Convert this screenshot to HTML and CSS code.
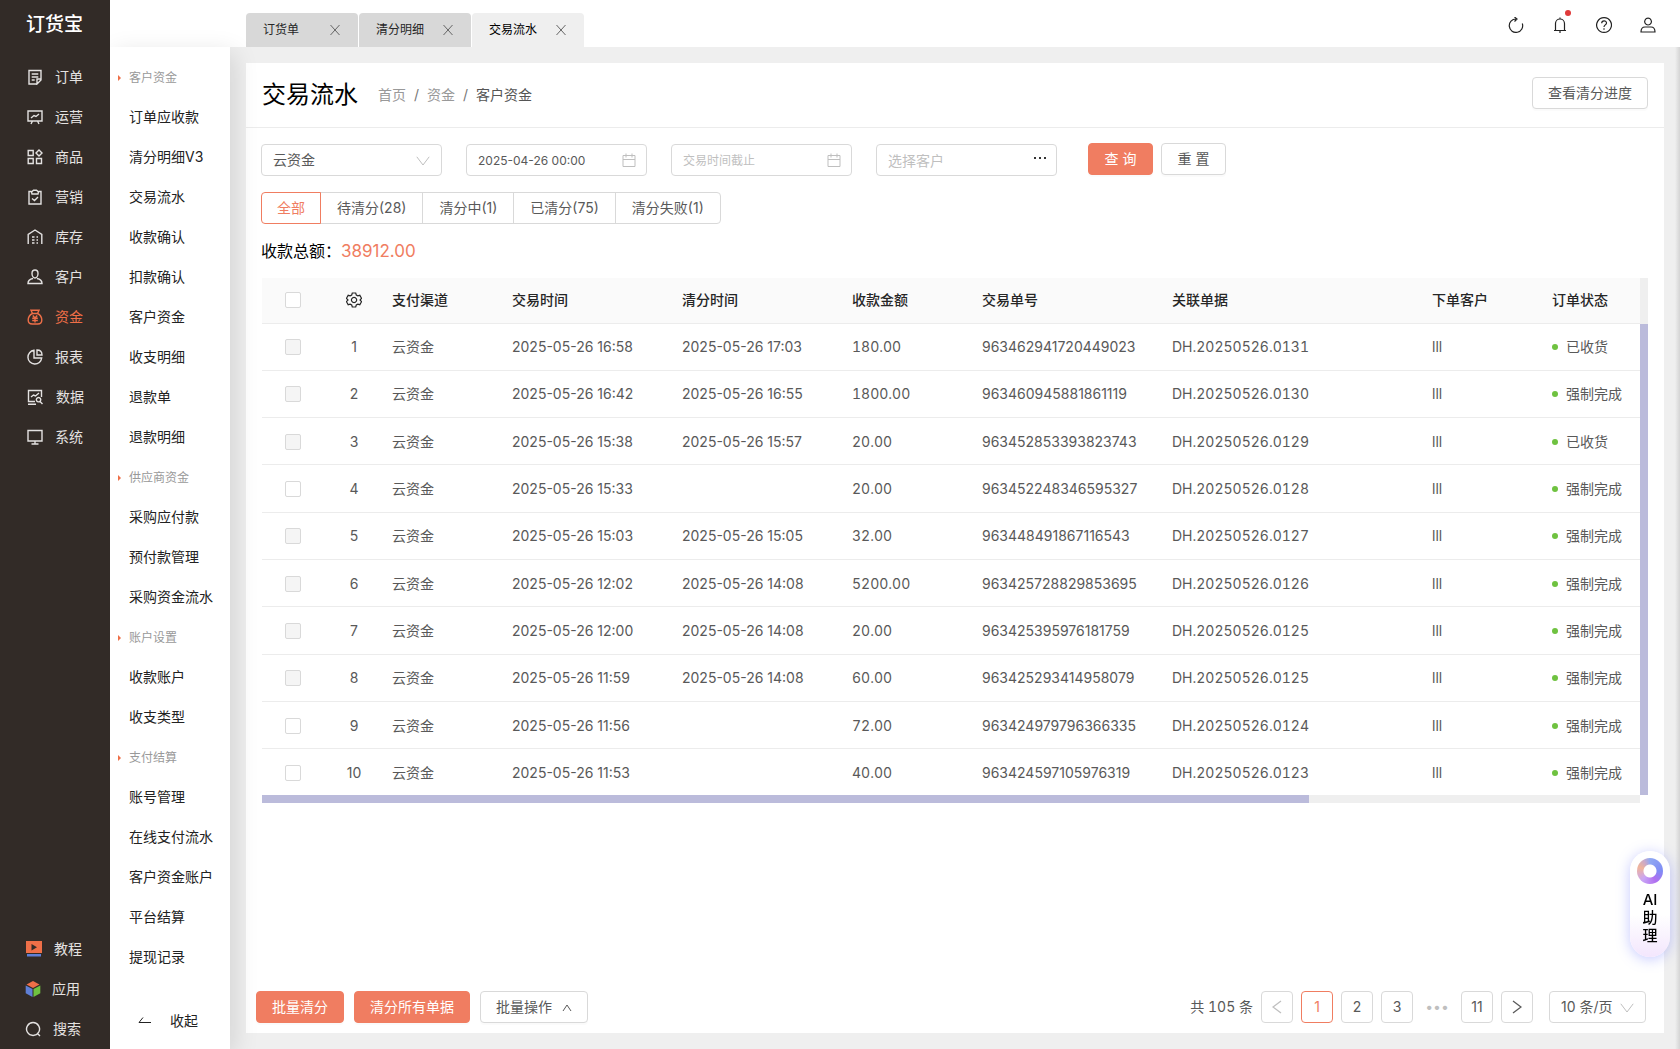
FILE: index.html
```html
<!DOCTYPE html>
<html lang="zh-CN">
<head>
  <meta charset="UTF-8" />
  <meta name="viewport" content="width=device-width, initial-scale=1.0" />
  <title>交易流水</title>
  <link rel="stylesheet" href="styles.css">
</head>
<body>

  <svg class="sprite" aria-hidden="true">
    <symbol id="i-close" viewBox="0 0 12 12"><path d="M1.5 1l9 10M10.5 1l-9 10"/></symbol>
    <symbol id="i-down" viewBox="0 0 14 10"><path d="M.8.8 7 9 13.200.8"/></symbol>
    <symbol id="i-date" viewBox="0 0 16 16"><path d="M2 3.500h12v11H2zM2 7.500h12M5 1.500v4M11 1.500v4"/></symbol>
  </svg>

  <div class="app">
    <aside class="sidebar">
      <div class="logo">订货宝</div>
      <nav class="menu">
        <a href="#"><svg viewBox="0 0 16 16"><path d="M9.500 15H2V1.500h12V10M4.700 5h6.600M4.700 8h6.600M4.700 11h3M14 10h-4v5l4-4z"/></svg>订单</a>
        <a href="#"><svg viewBox="0 0 16 16"><path d="M1 2h14v10H1zM5.500 12 4 15M10.500 12l1.500 3M4 9l3-2.500 2 1L12 5"/></svg>运营</a>
        <a href="#"><svg viewBox="0 0 16 16"><path d="M1.200 1.500h5v5h-5zM1.200 9.500h5v5h-5zM9.500 9.500h5v5h-5zM12 1l3 3-3 3-3-3z"/></svg>商品</a>
        <a href="#"><svg viewBox="0 0 16 16"><path d="M4.500 2.500H2V15h12V2.500h-2.500M5 5h6l.5-2-2-1.800h-3L4.500 3zM5 9.500l2.500 2L11 8"/></svg>营销</a>
        <a href="#"><svg viewBox="0 0 16 16"><path d="M1.200 15V5.500L8 1l6.800 4.500V15M5 8h2.500M9.500 8H11M5 11h2.500M9.500 11H11M5 14h2.500M9.500 14H11"/></svg>库存</a>
        <a href="#"><svg viewBox="0 0 16 16"><path d="M8 1c2 0 3 1.500 3 3.500S9.800 9 8 9 5 6.500 5 4.500 6 1 8 1zM6 9.500c-3 .5-5 2-5 5h14c0-3-2-4.500-5-5"/></svg>客户</a>
        <a href="#" class="active"><svg viewBox="0 0 16 16"><path d="M5.500 4.500 4 1.200h8l-1.500 3.300zM5.500 4.500C2.500 6 1.200 8.500 1.200 11c0 2.500 1.800 4 4 4h5.600c2.200 0 4-1.500 4-4 0-2.500-1.300-5-4.300-6.500M5.800 6.500 8 9l2.200-2.500M5.200 9.300h5.600M5.200 11.500h5.600M8 9v4.500"/></svg>资金</a>
        <a href="#"><svg viewBox="0 0 16 16"><path d="M7 1.300a6.900 6.900 0 1 0 7.700 7.700H7zM10 1v5h5c0-3-2-5-5-5z"/></svg>报表</a>
        <a href="#" class="data"><svg viewBox="0 0 16 16"><path d="M8 12.500H1.500v-11h13V8M1 15.200h8M4 8l2.500-2 2 1L12 4M11.500 8.500a2.200 2.200 0 1 0 .1 0zM13 12.500l2.500 2.500"/></svg>数据</a>
        <a href="#"><svg viewBox="0 0 16 16"><path d="M1 1.500h14v10.500H1zM8 12v3M4.500 15h7"/></svg>系统</a>
      </nav>
      <nav class="menu menu-bottom">
        <a href="#"><svg class="color" viewBox="0 0 16 16"><path fill="#ee6f48" d="M0 0h16v12H0z"/><path fill="#322b27" d="M5.500 3v6.500L11 6.200z"/><path fill="#5f7fd6" d="M1 13h14v2.500H1z"/></svg>教程</a>
        <a href="#" class="apps"><svg class="color" viewBox="0 0 16 16"><path fill="#ee6f48" d="M8 0l6.500 3.500L8 7 1.500 3.500z"/><path fill="#5f7fd6" d="M.7 4.500 7.500 8v8L.7 12.300z"/><path fill="#6fc240" d="M15.300 4.500 8.500 8v8l6.800-3.700z"/></svg>应用</a>
        <a href="#" class="search"><svg viewBox="0 0 16 16"><path d="M8 1.500a6.500 6.500 0 1 0 .1 0zM12 12l3 3"/></svg>搜索</a>
      </nav>
    </aside>

    <div class="page">
      <header class="topbar">
        <div class="tabs">
          <div class="tab"><a href="#">订货单</a><button aria-label="关闭"><svg><use href="#i-close"/></svg></button></div>
          <div class="tab"><a href="#">清分明细</a><button aria-label="关闭"><svg><use href="#i-close"/></svg></button></div>
          <div class="tab current"><a href="#">交易流水</a><button aria-label="关闭"><svg><use href="#i-close"/></svg></button></div>
        </div>
        <div class="tools">
          <button aria-label="刷新"><svg viewBox="0 0 16 16"><path d="M8 2a6.700 6.700 0 1 0 6.300 4.500M6.500 0 9 2 6.500 4.500"/></svg></button>
          <button aria-label="通知"><svg viewBox="0 0 16 16"><path d="M2 13.500h12M3.500 13.500V6.500a4.500 4.500 0 0 1 9 0v7M8 .5V2M8 13.500V16"/></svg><span class="dot"></span></button>
          <button aria-label="帮助"><svg viewBox="0 0 16 16"><path d="M8 .6a7.400 7.400 0 1 0 .1 0zM5.700 6.300C5.700 3 10.500 3.200 10.500 6 10.500 7.800 8 8 8 10M8 11.300v1.400"/></svg></button>
          <button aria-label="账户"><svg viewBox="0 0 16 16"><path d="M8 1.200a3.400 3.400 0 1 0 .1 0zM1 15c0-3 1.500-5 4-5h6c2.500 0 4 2 4 5z"/></svg></button>
        </div>
      </header>

      <div class="body">
        <nav class="submenu">
          <h4>客户资金</h4>
          <a href="#">订单应收款</a>
          <a href="#">清分明细V3</a>
          <a href="#">交易流水</a>
          <a href="#">收款确认</a>
          <a href="#">扣款确认</a>
          <a href="#">客户资金</a>
          <a href="#">收支明细</a>
          <a href="#">退款单</a>
          <a href="#">退款明细</a>
          <h4>供应商资金</h4>
          <a href="#">采购应付款</a>
          <a href="#">预付款管理</a>
          <a href="#">采购资金流水</a>
          <h4>账户设置</h4>
          <a href="#">收款账户</a>
          <a href="#">收支类型</a>
          <h4>支付结算</h4>
          <a href="#">账号管理</a>
          <a href="#">在线支付流水</a>
          <a href="#">客户资金账户</a>
          <a href="#">平台结算</a>
          <a href="#">提现记录</a>
          <button class="collapse"><svg viewBox="0 0 14 10"><path d="M5 1.500 1 6.500h12"/></svg>收起</button>
        </nav>

        <main>
          <section class="card">
            <div class="card-head">
              <h1>交易流水</h1>
              <div class="crumbs"><a href="#">首页</a><i>/</i><a href="#">资金</a><i>/</i><span>客户资金</span></div>
              <button class="btn">查看清分进度</button>
            </div>

            <div class="content">
              <form class="filters">
                <div class="field">
                  <select aria-label="支付渠道"><option>云资金</option></select>
                  <svg class="arrow"><use href="#i-down"/></svg>
                </div>
                <div class="field date">
                  <input type="text" value="2025-04-26 00:00" aria-label="交易时间起始" />
                  <svg><use href="#i-date"/></svg>
                </div>
                <div class="field date">
                  <input type="text" placeholder="交易时间截止" aria-label="交易时间截止" />
                  <svg><use href="#i-date"/></svg>
                </div>
                <div class="field">
                  <input type="text" placeholder="选择客户" aria-label="选择客户" />
                  <svg class="more" viewBox="0 0 14 4"><path d="M1 1h2v2H1zM6 1h2v2H6zM11 1h2v2h-2z"/></svg>
                </div>
                <div class="actions">
                  <button type="button" class="btn primary">查 询</button>
                  <button type="button" class="btn">重 置</button>
                </div>
              </form>

              <div class="states">
                <button class="on">全部</button>
                <button>待清分(28)</button>
                <button>清分中(1)</button>
                <button>已清分(75)</button>
                <button>清分失败(1)</button>
              </div>

              <p class="total">收款总额：<b>38912.00</b></p>

              <div class="grid">
                <table>
                  <colgroup>
                    <col class="c-check"><col class="c-index"><col class="c-channel"><col class="c-time"><col class="c-time">
                    <col class="c-amount"><col class="c-number"><col class="c-bill"><col class="c-customer"><col>
                  </colgroup>
                  <thead>
                    <tr>
                      <th><input type="checkbox" aria-label="全选" /></th>
                      <th><svg class="gear" viewBox="0 0 16 16"><path d="M6.300 1h3.400l.6 2 1.500.8 2-.5 1.700 3L14 8l1.500 1.700-1.700 3-2-.5-1.500.8-.6 2H6.300l-.6-2-1.500-.8-2 .5-1.700-3L2 8 .5 6.300l1.700-3 2 .5 1.500-.8zM8 5.400a2.600 2.600 0 1 0 .1 0z"/></svg></th>
                      <th>支付渠道</th><th>交易时间</th><th>清分时间</th><th>收款金额</th><th>交易单号</th><th>关联单据</th><th>下单客户</th><th>订单状态</th>
                    </tr>
                  </thead>
                  <tbody>
                    <tr><td><input type="checkbox" aria-label="选择第1行" disabled /></td><td>1</td><td>云资金</td><td>2025-05-26 16:58</td><td>2025-05-26 17:03</td><td>180.00</td><td>963462941720449023</td><td>DH.20250526.0131</td><td>lll</td><td><span class="status">已收货</span></td></tr>
                    <tr><td><input type="checkbox" aria-label="选择第2行" disabled /></td><td>2</td><td>云资金</td><td>2025-05-26 16:42</td><td>2025-05-26 16:55</td><td>1800.00</td><td>963460945881861119</td><td>DH.20250526.0130</td><td>lll</td><td><span class="status">强制完成</span></td></tr>
                    <tr><td><input type="checkbox" aria-label="选择第3行" disabled /></td><td>3</td><td>云资金</td><td>2025-05-26 15:38</td><td>2025-05-26 15:57</td><td>20.00</td><td>963452853393823743</td><td>DH.20250526.0129</td><td>lll</td><td><span class="status">已收货</span></td></tr>
                    <tr><td><input type="checkbox" aria-label="选择第4行" /></td><td>4</td><td>云资金</td><td>2025-05-26 15:33</td><td></td><td>20.00</td><td>963452248346595327</td><td>DH.20250526.0128</td><td>lll</td><td><span class="status">强制完成</span></td></tr>
                    <tr><td><input type="checkbox" aria-label="选择第5行" disabled /></td><td>5</td><td>云资金</td><td>2025-05-26 15:03</td><td>2025-05-26 15:05</td><td>32.00</td><td>963448491867116543</td><td>DH.20250526.0127</td><td>lll</td><td><span class="status">强制完成</span></td></tr>
                    <tr><td><input type="checkbox" aria-label="选择第6行" disabled /></td><td>6</td><td>云资金</td><td>2025-05-26 12:02</td><td>2025-05-26 14:08</td><td>5200.00</td><td>963425728829853695</td><td>DH.20250526.0126</td><td>lll</td><td><span class="status">强制完成</span></td></tr>
                    <tr><td><input type="checkbox" aria-label="选择第7行" disabled /></td><td>7</td><td>云资金</td><td>2025-05-26 12:00</td><td>2025-05-26 14:08</td><td>20.00</td><td>963425395976181759</td><td>DH.20250526.0125</td><td>lll</td><td><span class="status">强制完成</span></td></tr>
                    <tr><td><input type="checkbox" aria-label="选择第8行" disabled /></td><td>8</td><td>云资金</td><td>2025-05-26 11:59</td><td>2025-05-26 14:08</td><td>60.00</td><td>963425293414958079</td><td>DH.20250526.0125</td><td>lll</td><td><span class="status">强制完成</span></td></tr>
                    <tr><td><input type="checkbox" aria-label="选择第9行" /></td><td>9</td><td>云资金</td><td>2025-05-26 11:56</td><td></td><td>72.00</td><td>963424979796366335</td><td>DH.20250526.0124</td><td>lll</td><td><span class="status">强制完成</span></td></tr>
                    <tr><td><input type="checkbox" aria-label="选择第10行" /></td><td>10</td><td>云资金</td><td>2025-05-26 11:53</td><td></td><td>40.00</td><td>963424597105976319</td><td>DH.20250526.0123</td><td>lll</td><td><span class="status">强制完成</span></td></tr>
                  </tbody>
                </table>
                <div class="scroll-y"></div>
                <div class="scroll-x"><div class="thumb"></div></div>
              </div>
            </div>

            <footer class="card-foot">
              <button class="btn primary">批量清分</button>
              <button class="btn primary">清分所有单据</button>
              <button class="btn">批量操作<svg class="up" viewBox="0 0 10 8"><path d="M1 7l4-6 4 6"/></svg></button>
              <div class="pager">
                <span class="count">共 105 条</span>
                <button class="prev" aria-label="上一页" disabled><svg viewBox="0 0 10 14"><path d="M9 1 1 7l8 6"/></svg></button>
                <button class="on">1</button>
                <button>2</button>
                <button>3</button>
                <span class="gap">•••</span>
                <button>11</button>
                <button aria-label="下一页"><svg viewBox="0 0 10 14"><path d="M1 1l8 6-8 6"/></svg></button>
                <div class="field size">
                  <select aria-label="每页条数"><option>10 条/页</option></select>
                  <svg class="arrow"><use href="#i-down"/></svg>
                </div>
              </div>
            </footer>
          </section>
        </main>
      </div>
    </div>
  </div>

  <button class="assistant">
    <span class="ring"></span>
    <span>AI</span>
    <span>助</span>
    <span>理</span>
  </button>

</body>
</html>
```

FILE: styles.css
```css
* {
  box-sizing: border-box;
}

body {
  margin: 0;
  font-family: Inter, "Noto Sans CJK SC", sans-serif;
  font-size: 14px;
  line-height: 20px;
  color: #595959;
  background: #efefef;
}

a {
  color: inherit;
  text-decoration: none;
}

button,
input,
select {
  font: inherit;
  color: inherit;
}

button {
  padding: 0;
  border: none;
  background: none;
  cursor: pointer;
}

svg {
  flex: none;
  fill: none;
  stroke: currentColor;
}

.sprite {
  display: none;
}

.app {
  display: flex;
  min-height: 100vh;
}

/* 左侧主菜单 */
.sidebar {
  display: flex;
  flex-direction: column;
  width: 110px;
  background: #322b27;
  color: #e4e2e1;
}

.logo {
  height: 57px;
  padding: 11px 0 0 26px;
  font-size: 19px;
  line-height: 28px;
  font-weight: 500;
  color: #fff;
}

.menu a {
  display: flex;
  align-items: center;
  gap: 12px;
  height: 40px;
  padding-left: 27px;
}

.menu svg {
  width: 16px;
  height: 16px;
  stroke-width: 1.4;
}

.menu .data {
  gap: 13px;
}

.menu .active {
  color: #ee6f48;
}

.menu-bottom {
  margin-top: auto;
}

.menu-bottom a {
  padding-left: 26px;
}

.menu-bottom .apps {
  gap: 11px;
  padding-left: 25px;
}

.menu-bottom .search {
  padding-left: 25px;
}

.menu .color {
  stroke: none;
}

/* 顶部 */
.page {
  display: flex;
  flex-direction: column;
  flex: 1;
  min-width: 0;
}

.topbar {
  display: flex;
  align-items: flex-end;
  justify-content: space-between;
  height: 47px;
  padding: 0 24px 0 136px;
  background: #fff;
}

.tabs {
  display: flex;
  gap: 1px;
}

.tab {
  display: flex;
  align-items: center;
  justify-content: space-between;
  width: 112px;
  height: 34px;
  padding: 0 17px;
  border-radius: 4px 4px 0 0;
  background: #d8d8d8;
  font-size: 12px;
  color: #262626;
}

.tab svg {
  display: block;
  width: 12px;
  height: 12px;
  color: #666;
}

.tab.current {
  background: #efefef;
  color: #000;
}

.tools {
  display: flex;
  align-items: center;
  gap: 28px;
  height: 44px;
}

.tools button {
  position: relative;
  width: 16px;
  height: 16px;
  color: #222;
}

.tools svg {
  display: block;
  width: 16px;
  height: 16px;
  stroke-width: 1.2;
}

.dot {
  position: absolute;
  top: -7px;
  right: -3px;
  width: 6px;
  height: 6px;
  border-radius: 50%;
  background: #e03a3a;
}

.body {
  display: flex;
  flex: 1;
}

/* 二级菜单 */
.submenu {
  position: relative;
  display: flex;
  flex-direction: column;
  width: 120px;
  padding: 10px 0 8px;
  background: #fff;
  color: #222;
  box-shadow: 4px 6px 24px rgba(0, 0, 0, 0.12);
  clip-path: inset(-24px -32px 0 0);
}

.submenu h4,
.submenu a {
  display: flex;
  align-items: center;
  height: 40px;
  margin: 0;
  padding-left: 19px;
}

.submenu h4 {
  gap: 8px;
  padding-top: 1px;
  padding-left: 8px;
  font-size: 12px;
  font-weight: normal;
  color: #999;
}

.submenu h4::before {
  content: "";
  border: 3px solid transparent;
  border-left-color: #ee6f48;
  border-right: none;
}

.collapse {
  display: flex;
  align-items: center;
  gap: 18px;
  height: 40px;
  margin-top: auto;
  padding-left: 28px;
}

.collapse svg {
  width: 14px;
  height: 10px;
}

/* 内容卡片 */
main {
  display: flex;
  flex: 1;
  min-width: 0;
  padding: 16px;
  background: linear-gradient(to left, #d4d4d4, #efefef) right / 5px 100% no-repeat;
}

.card {
  display: flex;
  flex-direction: column;
  flex: 1;
  min-width: 0;
  background: #fff;
}

.card-head {
  display: flex;
  align-items: center;
  height: 65px;
  padding: 0 16px;
  border-bottom: 1px solid #ececec;
}

.card-head h1 {
  margin: 0 20px 0 0;
  font-size: 24px;
  line-height: 32px;
  font-weight: normal;
  color: #000;
}

.card-head .btn {
  margin: 0 0 4px auto;
}

.crumbs {
  color: #999;
}

.crumbs i {
  margin: 0 8px;
  font-style: normal;
  color: #777;
}

.crumbs span {
  color: #555;
}

.btn {
  height: 32px;
  padding: 0 15px;
  border: 1px solid #d9d9d9;
  border-radius: 4px;
  background: #fff;
  box-shadow: 0 2px 1px rgba(0, 0, 0, 0.02);
}

.btn.primary {
  border-color: #f07d61;
  background: #f07d61;
  color: #fff;
}

.content {
  flex: 1;
  padding: 15px 16px 0 15px;
}

.filters {
  display: flex;
  align-items: flex-end;
  gap: 24px;
  height: 33px;
}

.field {
  position: relative;
  width: 181px;
}

.field select,
.field input {
  display: block;
  width: 100%;
  height: 32px;
  padding: 0 11px;
  border: 1px solid #d9d9d9;
  border-radius: 4px;
  background: #fff;
  appearance: none;
}

.date input {
  font-size: 12px;
}

.field input::placeholder {
  color: #bfbfbf;
}

.field svg {
  position: absolute;
  top: 8px;
  right: 10px;
  width: 16px;
  height: 16px;
  color: #bfbfbf;
  pointer-events: none;
}

.field .arrow {
  top: 12px;
  right: 12px;
  width: 14px;
  height: 10px;
}

.field .more {
  top: 12px;
  width: 14px;
  height: 4px;
  fill: #333;
  stroke: none;
}

.actions {
  display: flex;
  align-self: flex-start;
  gap: 8px;
  margin-left: 7px;
}

.actions .btn {
  width: 65px;
}

.states {
  display: flex;
  margin-top: 16px;
}

.states button {
  height: 32px;
  margin-right: -1px;
  padding: 0 16px;
  border: 1px solid #d9d9d9;
}

.states button:first-child {
  padding: 0 15px;
  border-radius: 4px 0 0 4px;
}

.states button:last-child {
  border-radius: 0 4px 4px 0;
}

.states .on {
  z-index: 1;
  border-color: #f07d61;
  color: #f07d61;
}

.total {
  margin: 15px 0;
  font-size: 16px;
  line-height: 24px;
  color: #000;
}

.total b {
  font-size: 17px;
  font-weight: normal;
  color: #f07d61;
}

/* 表格 */
.grid {
  display: grid;
  grid-template-columns: 1fr 8px;
  padding-left: 1px;
}

table {
  width: 100%;
  height: 517px;
  table-layout: fixed;
  border-collapse: collapse;
}

.c-check { width: 62px; }
.c-index { width: 60px; }
.c-channel,
.c-customer { width: 120px; }
.c-time { width: 170px; }
.c-amount { width: 130px; }
.c-number { width: 190px; }
.c-bill { width: 260px; }

th,
td {
  padding: 0 8px;
  border-bottom: 1px solid #ececec;
  text-align: left;
  white-space: nowrap;
}

th {
  height: 45px;
  background: #fafafa;
  font-weight: 500;
  color: #262626;
}

td {
  padding-top: 1px;
}

/* 金额、单据号等宽数字 */
td:nth-child(6),
td:nth-child(8) {
  font-variant-numeric: tabular-nums;
}

tbody tr:last-child td {
  border-bottom: none;
}

th:nth-child(-n+2),
td:nth-child(-n+2) {
  text-align: center;
}

td input,
th input {
  display: block;
  width: 16px;
  height: 16px;
  margin: 0 auto;
  border: 1px solid #d9d9d9;
  border-radius: 2px;
  background: #fff;
  appearance: none;
}

td input:disabled {
  background: #f5f5f5;
}

.gear {
  display: block;
  width: 16px;
  height: 16px;
  margin: 0 auto;
  stroke-width: 1.2;
}

.status {
  display: flex;
  align-items: center;
  gap: 8px;
}

.status::before {
  content: "";
  width: 6px;
  height: 6px;
  border-radius: 50%;
  background: #6fc240;
}

.scroll-y {
  border-top: 46px solid #efefef;
  background: #bbbbdb;
}

.scroll-x {
  height: 8px;
  background: #efefef;
}

.scroll-x .thumb {
  width: 76%;
  height: 8px;
  background: #bbbbdb;
}

/* 底部操作与分页 */
.card-foot {
  display: flex;
  gap: 10px;
  padding: 10px 18px 10px 10px;
}

.up {
  width: 10px;
  height: 8px;
  margin-left: 10px;
}

.pager {
  display: flex;
  align-items: center;
  gap: 8px;
  margin-left: auto;
}

.pager > button {
  display: flex;
  align-items: center;
  justify-content: center;
  width: 32px;
  height: 32px;
  border: 1px solid #d9d9d9;
  border-radius: 4px;
}

.pager > button svg {
  width: 10px;
  height: 14px;
  stroke-width: 1.3;
}

.count {
  font-variant-numeric: tabular-nums;
}

.pager .prev {
  color: #bfbfbf;
}

.pager > .on {
  border-color: #f07d61;
  color: #f07d61;
}

.pager .gap {
  width: 32px;
  text-align: center;
  color: #bfbfbf;
}

.size {
  width: 97px;
  margin-left: 8px;
}

/* AI 助理 */
.assistant {
  position: fixed;
  right: 10px;
  bottom: 92px;
  display: flex;
  flex-direction: column;
  align-items: center;
  width: 40px;
  padding: 7px 0 12px;
  border-radius: 20px;
  background: linear-gradient(#fff 60%, #f3e6fd);
  box-shadow: 0 2px 14px rgba(110, 120, 255, 0.4);
  font-size: 15px;
  line-height: 18px;
  font-weight: 500;
  color: #000;
}

.ring {
  width: 26px;
  height: 26px;
  margin-bottom: 7px;
  border-radius: 50%;
  background: radial-gradient(#fff 6px, transparent 7px),
    conic-gradient(#8fa8f2, #7f8cf5 90deg, #b06ff0 150deg, #c9a5f5 220deg, #f0b49a 290deg, #c9a9c9 330deg, #8fa8f2);
}
```
